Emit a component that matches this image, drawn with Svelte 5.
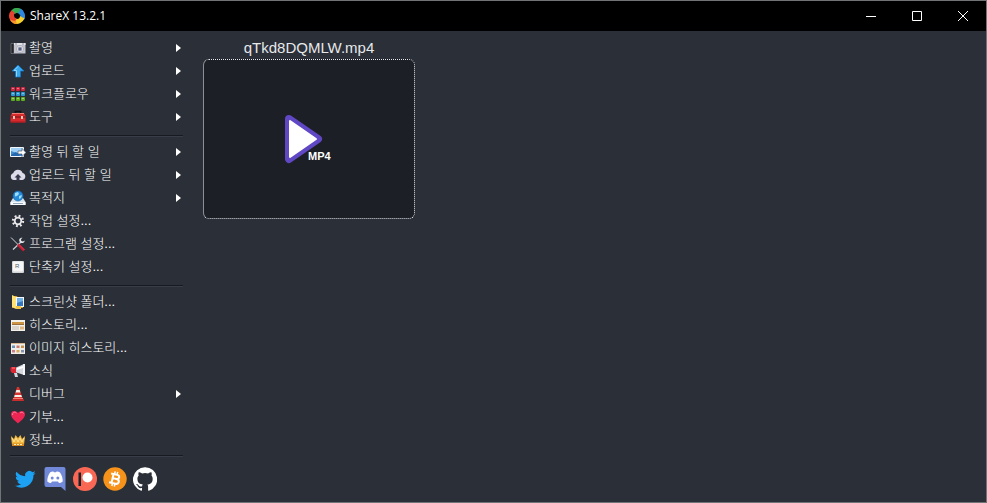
<script lang="ts">
  type Item = { label: string; icon: string; submenu?: boolean };

  const version = "ShareX 13.2.1";

  const groups: Item[][] = [
    [
      { label: "촬영", icon: "camera", submenu: true },
      { label: "업로드", icon: "upload", submenu: true },
      { label: "워크플로우", icon: "grid", submenu: true },
      { label: "도구", icon: "toolbox", submenu: true },
    ],
    [
      { label: "촬영 뒤 할 일", icon: "after-capture", submenu: true },
      { label: "업로드 뒤 할 일", icon: "cloud", submenu: true },
      { label: "목적지", icon: "drive", submenu: true },
      { label: "작업 설정...", icon: "gear" },
      { label: "프로그램 설정...", icon: "tools" },
      { label: "단축키 설정...", icon: "key" },
    ],
    [
      { label: "스크린샷 폴더...", icon: "folder" },
      { label: "히스토리...", icon: "history" },
      { label: "이미지 히스토리...", icon: "image-history" },
      { label: "소식", icon: "megaphone" },
      { label: "디버그", icon: "cone", submenu: true },
      { label: "기부...", icon: "heart" },
      { label: "정보...", icon: "crown" },
    ],
  ];

  const links = [
    { name: "Twitter", icon: "twitter" },
    { name: "Discord", icon: "discord" },
    { name: "Patreon", icon: "patreon" },
    { name: "Bitcoin", icon: "bitcoin" },
    { name: "GitHub", icon: "github" },
  ];

  const gridColors = ["#d92440", "#2b9bd8", "#5fae1e"];
  const fileName = "qTkd8DQMLW.mp4";
</script>

{#snippet menuIcon(name: string)}
  <svg class="icon" viewBox="0 0 16 16" aria-hidden="true">
    {#if name === "camera"}
      <path d="M1 3.5h3v10H1z" fill="#26272c" stroke="#85878e" stroke-width=".6" />
      <path d="M4 3h11.5v10.5H4z" fill="#c3c4ce" />
      <path d="M4 3h11.5v2H4z" fill="#e3e3ea" />
      <path d="M5 4h2M12 4h2" stroke="#8b8f9b" />
      <circle cx="10" cy="9" r="3.5" fill="#e9e9f0" stroke="#9195a3" stroke-width=".6" />
      <circle cx="10" cy="9" r="2.2" fill="#8b92a8" />
      <circle cx="10" cy="9" r="1" fill="#4a5270" />
    {:else if name === "upload"}
      <path d="M8 2l6 6h-3.5v6h-5V8H2z" fill="#39a9ef" stroke="#1474c4" stroke-width=".8" />
      <path d="M8 3.5l-4 4h2.5v6" fill="none" stroke="#8fd5ff" />
    {:else if name === "grid"}
      {#each gridColors as color, row}
        {#each [0, 1, 2] as col}
          <rect x={1 + col * 5} y={1 + row * 5} width="4" height="4" rx="1" fill={color} />
          <rect x={2 + col * 5} y={2 + row * 5} width="2" height="1" fill="#fff" opacity=".4" />
        {/each}
      {/each}
    {:else if name === "toolbox"}
      <path d="M5.5 5V2.5h5V5" fill="none" stroke="#111" stroke-width="1.6" />
      <path d="M2 4h12l1.5 3v6.5H.5V7z" fill="#d52b2c" />
      <path d="M2 4.5h12" stroke="#f17b70" />
      <path d="M.5 8h15" stroke="#741115" />
      <path d="M1 13h14" stroke="#a51620" />
      <path d="M3 7h2v3H3zM11 7h2v3h-2z" fill="#eac9b8" />
    {:else if name === "after-capture"}
      <path d="M.5 3.5h13v9H.5z" fill="#3d8bd3" stroke="#f2f5fa" />
      <path d="M1 4h12v3L7 9 1 7z" fill="#9fd1f6" />
      <path d="M1 11l5-3 4 4H1z" fill="#2668b0" />
      <path d="M8 7h4V4.5l4 4-4 4V10H8z" fill="#fff" stroke="#34445c" stroke-width=".6" />
    {:else if name === "cloud"}
      <path
        d="M4 13a3.5 3.5 0 0 1-.8-6.8A5 5 0 0 1 12.6 6a3.6 3.6 0 0 1-.1 7z"
        fill="#dcdbe9"
      />
      <path d="M8 7l3.5 3.5h-2V14h-3v-3.5h-2z" fill="#343848" />
    {:else if name === "drive"}
      <path d="M3 8h10l2.5 4v3H.5v-3z" fill="#d7e3ef" />
      <path d="M.5 12h15v3H.5z" fill="#f6f9fd" />
      <path d="M3 13.5h10" stroke="#91a5ba" />
      <circle cx="8" cy="6" r="5" fill="#258bd8" stroke="#1665aa" stroke-width=".6" />
      <path d="M5 3l3-1 1 2-2 2-2 .5zM9 6l3-1-1 3-2 1z" fill="#9bdcff" />
    {:else if name === "gear"}
      <circle cx="8" cy="8" r="5" fill="none" stroke="#e6e6ea" stroke-width="2.4" stroke-dasharray="1.8 2.127" />
      <circle cx="8" cy="8" r="3.3" fill="none" stroke="#e6e6ea" stroke-width="1.8" />
    {:else if name === "tools"}
      <path d="M3 13.5L11 6" stroke="#cfd1d8" stroke-width="1.2" />
      <path
        d="M14.5 4.5l-1.5 1-1.7-.5-.3-1.8 1.5-1.5c-2.5-.2-4 1.5-3 3.8L11 7c2 .5 4-.8 3.5-2.5z"
        fill="#e2e4e9"
      />
      <path d="M1 1.5l7 7" stroke="#d4d5db" stroke-width="1" />
      <path d="M8 8.5l6 6" stroke="#c21c32" stroke-width="2.6" />
      <path d="M9 8.5l5.5 5.5" stroke="#ef5866" stroke-width=".6" />
    {:else if name === "key"}
      <rect x="2" y="2" width="12" height="12" rx="1" fill="#d3d4d7" />
      <rect x="3" y="2.5" width="10" height="10" rx="1" fill="#f6f6f7" />
      <text x="5" y="9" font-size="6" fill="#555b65">R</text>
    {:else if name === "folder"}
      <path d="M2 2h5l1 2h5v10H2z" fill="#d59d27" />
      <path d="M6 3h8v10H6z" fill="#f6faff" />
      <path d="M7 4h6v8H7z" fill="#72b2e8" />
      <path d="M7 9l6-2v5H7z" fill="#3777bd" />
      <path d="M2 1l4 2v12l-4-2z" fill="#ffe176" />
      <path d="M6 12h5v3H6z" fill="#f1c44b" />
    {:else if name === "history"}
      <path d="M1 3h14v11H1z" fill="#f3f0e9" />
      <path d="M2 5h12v3H2z" fill="#ce9544" />
      <path d="M2 7.5h12" stroke="#9a713d" />
      <path d="M2 10h7M2 12h7" stroke="#bdb8b2" />
      <path d="M10 9.5h4v3h-4z" fill="#dfb77e" />
    {:else if name === "image-history"}
      <path d="M1 3h14v11H1z" fill="#f0eee9" />
      <path d="M1 3.5h14" stroke="#d8b78e" />
      <path d="M2 5.5h3V8H2z" fill="#6c8fb8" />
      <path d="M6.5 5.5h3V8h-3z" fill="#cf7a70" />
      <path d="M11 5.5h3V8h-3z" fill="#c79450" />
      <path d="M2 10h3v2.5H2z" fill="#c9808a" />
      <path d="M6.5 10h3v2.5h-3z" fill="#d9ab5c" />
      <path d="M11 10h3v2.5h-3z" fill="#8292b0" />
    {:else if name === "megaphone"}
      <path d="M5 5l9-4v11L5 9z" fill="#d6d8df" />
      <path d="M7 5l6-2v2L7 7z" fill="#fff" />
      <path d="M13 1h2v11h-2z" fill="#f6f6f8" />
      <path d="M1 4h5v6H2L.5 8V5z" fill="#dc2634" />
      <path d="M2 5h3" stroke="#ff8380" />
      <path d="M4 10h3l1 4H5z" fill="#d2d5dc" />
    {:else if name === "cone"}
      <path d="M7 1h2l3.5 11h-9z" fill="#d9352e" />
      <path d="M6.3 4h3.4l.7 2.5H5.6zM4.8 9h6.4l.8 2H4.2z" fill="#f7eeea" />
      <path d="M3 12h10l1 3H2z" fill="#c92d2b" />
      <path d="M3 12.5h10" stroke="#f37d70" />
    {:else if name === "heart"}
      <path d="M8 14.5C5.5 12 1 9 1 5.5 1 1 6 1 8 4c2-3 7-3 7 1.5 0 3.5-4.5 6.5-7 9z" fill="#ed2553" />
      <path d="M2.5 6c0-3 2.5-3.500 4-2M10 4c1-1.200 3-.8 3.500.5" fill="none" stroke="#ff7f9c" />
    {:else}
      <path d="M1 4l3 3 1.500-4L8 6l2.500-3L12 7l3-3-1 9H2z" fill="#f4b93c" />
      <path d="M2 11.5h12V14H2z" fill="#d58822" />
      <path d="M2 6l2 4 2-4 2 4 2-4 2 4 2-4" fill="none" stroke="#ffe09a" />
      <path d="M4 12.5h2M7 12.5h2M10 12.5h2" stroke="#fff0b2" />
    {/if}
  </svg>
{/snippet}

{#snippet socialIcon(name: string)}
  <svg viewBox="0 0 24 24" aria-hidden="true">
    {#if name === "twitter"}
      <path
        fill="#1da1f2"
        transform="translate(2 2) scale(.86)"
        d="M24 4.600a10 10 0 0 1-2.800.8 5 5 0 0 0 2.200-2.700c-1 .5-2 1-3.100 1.200a4.900 4.900 0 0 0-8.400 4.500A14 14 0 0 1 1.700 3.200a4.900 4.900 0 0 0 1.500 6.500 5 5 0 0 1-2.200-.6v.1a4.900 4.900 0 0 0 3.900 4.800 5 5 0 0 1-2.200.1 4.900 4.900 0 0 0 4.600 3.400A9.900 9.900 0 0 1 0 19.500 14 14 0 0 0 21.500 7.100c1-.7 1.800-1.600 2.500-2.500z"
      />
    {:else if name === "discord"}
      <path d="M3.5 0h17a2 2 0 0 1 2 2v22L18 20H3.5a2 2 0 0 1-2-2V2a2 2 0 0 1 2-2z" fill="#7289da" />
      <path
        d="M7 5.5c1.200-.8 2.300-1 3.400-1l.5.800h2.200l.5-.8c1.100 0 2.200.2 3.400 1 2 3 2.900 6.300 2.700 9-1.200 1-2.500 1.500-3.700 1.500l-1-1.500H9l-1 1.500c-1.200 0-2.500-.5-3.700-1.500-.2-2.700.7-6 2.700-9z"
        fill="#fff"
      />
      <circle cx="9.2" cy="11" r="1.5" fill="#7289da" />
      <circle cx="14.8" cy="11" r="1.5" fill="#7289da" />
    {:else if name === "patreon"}
      <circle cx="12" cy="12" r="12" fill="#f96854" />
      <path d="M5.5 5.5H8V19H5.5z" fill="#16232c" />
      <circle cx="14.5" cy="10.5" r="5" fill="#fff" />
    {:else if name === "bitcoin"}
      <circle cx="12" cy="12" r="11.7" fill="#f7931a" />
      <g transform="rotate(13 12 12)" fill="none" stroke="#fff">
        <path
          d="M7 7.500h6.200c3.300 0 3.300 4.200 0 4.200H9.500 13.500c3.800 0 3.800 4.800 0 4.800H7M9.500 7.500v9"
          stroke-width="2"
        />
        <path d="M10.5 4.5v3M13 4.5v3M10.5 16.5v3M13 16.5v3" stroke-width="1.5" />
      </g>
    {:else}
      <path
        fill="#fff"
        d="M12 .3a12 12 0 0 0-3.800 23.400c.6.100.8-.3.800-.6v-2c-3.300.7-4-1.600-4-1.600-.6-1.400-1.400-1.800-1.400-1.800-1-.7.1-.7.1-.7 1.200.1 1.900 1.200 1.900 1.200 1 1.800 2.800 1.300 3.500 1 .1-.8.4-1.300.8-1.600-2.700-.3-5.500-1.300-5.500-6 0-1.200.5-2.300 1.300-3.100-.2-.4-.6-1.600 0-3.200 0 0 1-.3 3.400 1.200a11.500 11.500 0 0 1 6 0c2.300-1.500 3.300-1.200 3.300-1.200.6 1.600.2 2.800.1 3.200.8.800 1.200 1.900 1.200 3.200 0 4.600-2.800 5.600-5.500 5.900.5.400.9 1 .9 2.200v3.300c0 .3.100.7.800.6A12 12 0 0 0 12 .3"
      />
    {/if}
  </svg>
{/snippet}

<div class="window">
  <header>
    <svg class="logo" viewBox="0 0 16 16" aria-hidden="true">
      <path d="M2.3 2.3A8 8 0 0 1 13 1.8C9 2 7 4 6 6 5 5 4 3 2.3 2.3z" fill="#57b947" />
      <path d="M4 1a8 8 0 0 1 10 2l-3 5c0-3-3-4-6-2z" fill="#35a852" />
      <path d="M11 .6A8 8 0 0 1 15 12l-5-1c2-2 2-5-1-6 2-1 2-3 2-4.400z" fill="#2e86e0" />
      <path d="M15.5 10A8 8 0 0 1 4 15l2-5c2 2 5 1 5-2 2 1 3 2 4.500 2z" fill="#f7cf2c" />
      <path d="M6 15.7A8 8 0 0 1 2.500 2.200L6 5c-2 2-1 5 2 6-2 1-2 3-2 4.700z" fill="#e5432f" />
      <path d="M1 11.5A8 8 0 0 0 8 16l-1-3c-3 0-5-1-6-1.500z" fill="#f39a28" />
    </svg>
    <h1>{version}</h1>
    <div class="controls">
      <button aria-label="Minimize">
        <svg viewBox="0 0 12 12"><path d="M1 6.5h10" /></svg>
      </button>
      <button aria-label="Maximize">
        <svg viewBox="0 0 12 12"><path d="M1.5 1.5h9v9h-9z" /></svg>
      </button>
      <button aria-label="Close">
        <svg viewBox="0 0 12 12"><path d="M1 1l10 10M11 1L1 11" /></svg>
      </button>
    </div>
  </header>

  <div class="body">
    <aside>
      <nav>
        {#each groups as group}
          <ul>
            {#each group as item}
              <li>
                <button class="item" aria-haspopup={item.submenu ? "menu" : undefined}>
                  {@render menuIcon(item.icon)}
                  <span class="label">{item.label}</span>
                  {#if item.submenu}
                    <svg class="arrow" viewBox="0 0 5 8" aria-hidden="true">
                      <path d="M0 0l5 4-5 4z" />
                    </svg>
                  {/if}
                </button>
              </li>
            {/each}
          </ul>
        {/each}
      </nav>
      <div class="social">
        {#each links as link}
          <a href="#{link.icon}" aria-label={link.name}>{@render socialIcon(link.icon)}</a>
        {/each}
      </div>
    </aside>

    <main>
      <figure>
        <figcaption>{fileName}</figcaption>
        <button class="thumbnail" aria-label={fileName}>
          <svg viewBox="0 0 52 52" aria-hidden="true">
            <path
              d="M6 6l29 20L6 46z"
              fill="#6047c4"
              stroke="#6047c4"
              stroke-width="8"
              stroke-linejoin="round"
            />
            <path d="M7 8l26 18L7 44z" fill="#fff" stroke="#fff" stroke-width="2" stroke-linejoin="round" />
            <text class="format" x="25" y="47">MP4</text>
          </svg>
        </button>
      </figure>
    </main>
  </div>
</div>

<style>
  :global(body) {
    margin: 0;
    background: #2a2f38;
  }

  .window {
    display: flex;
    flex-direction: column;
    box-sizing: border-box;
    min-height: 100vh;
    border: 1px solid #717477;
    color: #e6e8ea;
    background: #2a2f38;
    font-family: "Liberation Sans", "Noto Sans CJK KR", sans-serif;
  }

  button {
    margin: 0;
    padding: 0;
    border: 0;
    color: inherit;
    background: none;
    font: inherit;
  }

  header {
    display: flex;
    align-items: center;
    height: 30px;
    padding-left: 8px;
    background: #000;
  }

  .logo {
    width: 16px;
    height: 16px;
  }

  h1 {
    margin: 0 0 0 5px;
    color: #fff;
    font: 400 12px/16px "Open Sans", sans-serif;
  }

  .controls {
    display: flex;
    margin-left: auto;
  }

  .controls button {
    display: grid;
    place-items: center;
    width: 46px;
    height: 30px;
  }

  .controls svg {
    width: 12px;
    height: 12px;
    fill: none;
    stroke: #fff;
  }

  .body {
    display: flex;
    flex: 1;
  }

  aside {
    flex: none;
    width: 173px;
    padding: 5px 9px 0;
  }

  ul {
    margin: 0;
    padding: 0;
    list-style: none;
  }

  ul + ul {
    margin-top: 7px;
    padding-top: 4px;
    border-top: 1px solid #171a20;
    box-shadow: inset 0 1px #383d47;
  }

  .item {
    display: flex;
    gap: 3px;
    align-items: center;
    width: 100%;
    height: 23px;
    padding-right: 2px;
    color: #fff;
    font-size: 13px;
    font-weight: 300;
    line-height: 20px;
    text-align: left;
  }

  .icon {
    flex: none;
    width: 16px;
    height: 16px;
  }

  .label {
    flex: 1;
    white-space: nowrap;
  }

  .arrow {
    width: 5px;
    height: 8px;
    fill: #fff;
  }

  .social {
    display: flex;
    gap: 6px;
    margin-top: 4px;
    padding: 11px 3px 10px;
    border-top: 1px solid #171a20;
    box-shadow: inset 0 1px #383d47;
  }

  .social a,
  .social svg {
    display: block;
    width: 24px;
    height: 24px;
  }

  main {
    flex: 1;
    padding: 8px 11px;
  }

  figure {
    width: 212px;
    margin: 0;
  }

  figcaption {
    font-size: 15px;
    line-height: 18px;
    text-align: center;
  }

  .thumbnail {
    display: grid;
    place-items: center;
    box-sizing: border-box;
    width: 100%;
    height: 160px;
    margin-top: 2px;
    border: 1px dotted #e8eaed;
    border-left: 1px solid #8b8e94;
    border-radius: 6px;
    background: #1c1f26;
  }

  .thumbnail svg {
    width: 52px;
    height: 52px;
  }

  .format {
    fill: #fff;
    stroke: #1c1f26;
    stroke-width: 2px;
    paint-order: stroke;
    font-size: 11px;
    font-weight: 700;
  }
</style>
